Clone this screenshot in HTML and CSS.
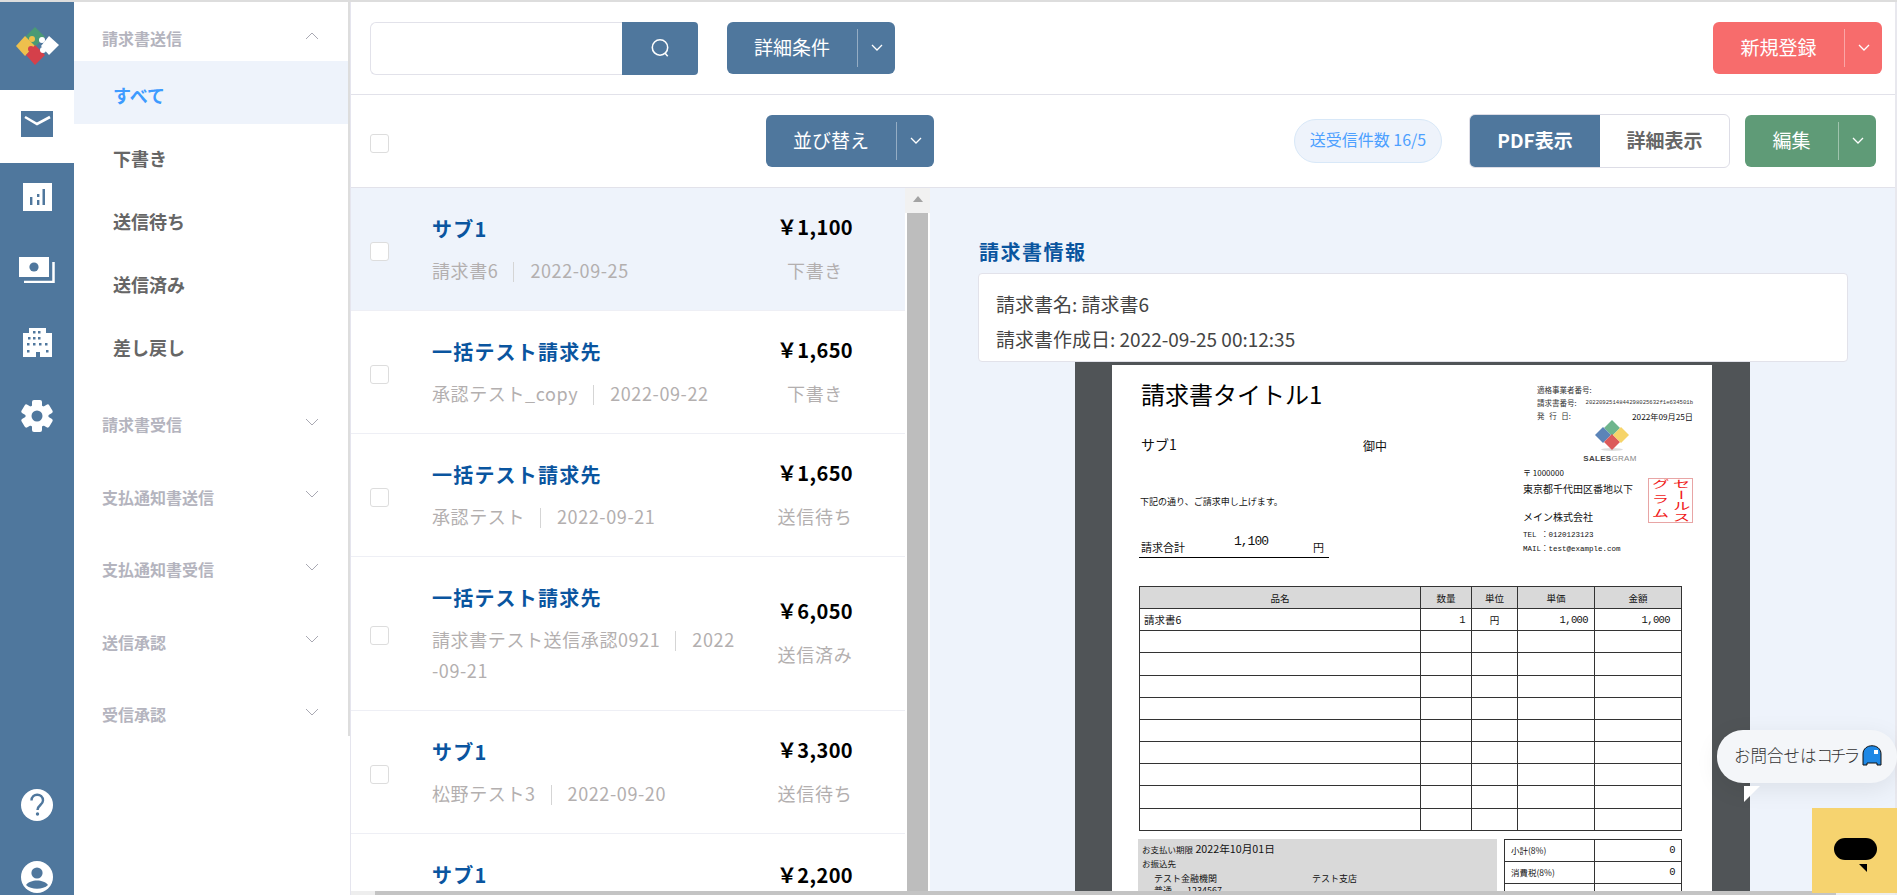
FILE: index.html
```html
<!DOCTYPE html>
<html lang="ja">
<head>
  <meta charset="UTF-8">
  <title>請求書送信</title>
  <link rel="stylesheet" href="styles.css">
</head>
<body>
<div class="app">

  <!-- icon rail -->
  <nav class="rail">
    <div class="rail-logo">
      <svg width="74" height="88" viewBox="0 2 74 88">
        <polygon points="35,27 45,37 35,47 25,37" fill="#4a9a75"/>
        <polygon points="25,36 35,46 25,56 16,46" fill="#eec04d"/>
        <circle cx="32" cy="39" r="3" fill="#eec04d"/>
        <polygon points="35,45 45,55 35,65 26,55" fill="#d5404a"/>
        <circle cx="31" cy="49" r="3" fill="#d5404a"/>
        <polygon points="49,36 59,45 49,55 41,46" fill="#fff"/>
        <circle cx="42" cy="40" r="3" fill="#fff"/>
        <circle cx="43" cy="50" r="3" fill="#fff"/>
      </svg>
    </div>
    <div class="rail-item active">
      <svg width="32" height="26" viewBox="0 0 32 26"><rect width="32" height="26" fill="#4f779d"/><path d="M4 6l12 7 13-7" fill="none" stroke="#fff" stroke-width="2.6"/></svg>
    </div>
    <div class="rail-item">
      <svg width="29" height="28" viewBox="0 0 29 28"><rect width="29" height="28" fill="#fff"/><path d="M7 14h2.4v8H7zM14 11h2.4v3H14zM14 17h2.4v5H14zM19.500 6h2.500v16h-2.500z" fill="#4f779d"/></svg>
    </div>
    <div class="rail-item">
      <svg width="36" height="26" viewBox="0 0 36 26"><rect width="30" height="20" fill="#fff"/><circle cx="15" cy="10" r="4.600" fill="#4f779d"/><path d="M5 25h29.500V5" fill="none" stroke="#fff" stroke-width="2.500"/></svg>
    </div>
    <div class="rail-item">
      <svg width="29" height="29" viewBox="0 0 29 29"><path d="M6 0h17v5h6v24H17v-5h-4v5H0V5h6z" fill="#fff"/><path d="M10 3h2.500v2.500H10zM15 3h2.500v2.500H15zM5 9h2.500v2.500H5zM10 9h2.500v2.500H10zM15 9h2.500v2.500H15zM4 15h2.500v2.500H4zM10 15h2.500v2.500H10zM16 15h2.500v2.500H16zM22 15h2.500v2.500H22zM4 22h2.500v2.500H4zM23 22h2.500v2.500H23z" fill="#4f779d"/></svg>
    </div>
    <div class="rail-item">
      <svg width="32" height="32" viewBox="-16 -16 32 32">
        <circle r="11.500" fill="#fff"/>
        <rect x="-5" y="-16" width="10" height="32" rx="2" fill="#fff"/>
        <rect x="-5" y="-16" width="10" height="32" rx="2" fill="#fff" transform="rotate(60)"/>
        <rect x="-5" y="-16" width="10" height="32" rx="2" fill="#fff" transform="rotate(120)"/>
        <circle r="5.500" fill="#4f779d"/>
      </svg>
    </div>
    <div class="rail-bottom">
      <svg width="32" height="32" viewBox="0 0 32 32"><circle cx="16" cy="16" r="16" fill="#fff"/><path d="M10.500 11.500c0-8 11.500-7.500 11.500 0 0 4.500-5.500 4.500-5.500 9.500" fill="none" stroke="#4f779d" stroke-width="2.400"/><circle cx="16.500" cy="25" r="1.700" fill="#4f779d"/></svg>
      <svg width="32" height="32" viewBox="0 0 32 32"><circle cx="16" cy="16" r="16" fill="#fff"/><circle cx="16" cy="12" r="5.600" fill="#4f779d"/><path d="M5 24c4-6 18-6 22 0-5 5-17 5-22 0z" fill="#4f779d"/></svg>
    </div>
  </nav>

  <!-- side menu -->
  <aside class="side">
    <div class="side-inner">
      <div class="side-head first"><span>請求書送信</span>
        <svg class="head-arrow" width="14" height="8" viewBox="0 0 14 8"><path d="M1 7l6-6 6 6" fill="none" stroke="#a9a9b3" stroke-width="1"/></svg>
      </div>
      <a class="side-link current">すべて</a>
      <a class="side-link">下書き</a>
      <a class="side-link">送信待ち</a>
      <a class="side-link">送信済み</a>
      <a class="side-link">差し戻し</a>
      <div class="side-head gap"><span>請求書受信</span>
        <svg class="head-arrow" width="14" height="8" viewBox="0 0 14 8"><path d="M1 1l6 6 6-6" fill="none" stroke="#a9a9b3" stroke-width="1"/></svg>
      </div>
      <div class="side-head"><span>支払通知書送信</span>
        <svg class="head-arrow" width="14" height="8" viewBox="0 0 14 8"><path d="M1 1l6 6 6-6" fill="none" stroke="#a9a9b3" stroke-width="1"/></svg>
      </div>
      <div class="side-head"><span>支払通知書受信</span>
        <svg class="head-arrow" width="14" height="8" viewBox="0 0 14 8"><path d="M1 1l6 6 6-6" fill="none" stroke="#a9a9b3" stroke-width="1"/></svg>
      </div>
      <div class="side-head"><span>送信承認</span>
        <svg class="head-arrow" width="14" height="8" viewBox="0 0 14 8"><path d="M1 1l6 6 6-6" fill="none" stroke="#a9a9b3" stroke-width="1"/></svg>
      </div>
      <div class="side-head"><span>受信承認</span>
        <svg class="head-arrow" width="14" height="8" viewBox="0 0 14 8"><path d="M1 1l6 6 6-6" fill="none" stroke="#a9a9b3" stroke-width="1"/></svg>
      </div>
    </div>
  </aside>

  <main class="main">
    <div class="toolbar">
      <div class="search">
        <div class="search-input"></div>
        <div class="search-btn">
          <svg width="22" height="22" viewBox="0 0 20 20"><circle cx="10" cy="9.500" r="7" fill="none" stroke="#fff" stroke-width="1.400"/><path d="M14.500 14.500l2.500 3" stroke="#fff" stroke-width="1.400"/></svg>
        </div>
      </div>
      <div class="split-btn blue w168">
        <span class="split-label">詳細条件</span><span class="split-sep"></span>
        <span class="split-caret"><svg width="12" height="8" viewBox="0 0 12 8"><path d="M1 1l5 5 5-5" fill="none" stroke="#fff" stroke-width="1.300"/></svg></span>
      </div>
      <div class="split-btn red w168 push">
        <span class="split-label">新規登録</span><span class="split-sep"></span>
        <span class="split-caret"><svg width="12" height="8" viewBox="0 0 12 8"><path d="M1 1l5 5 5-5" fill="none" stroke="#fff" stroke-width="1.300"/></svg></span>
      </div>
    </div>

    <div class="toolbar second">
      <span class="check"></span>
      <div class="split-btn blue w168 sort">
        <span class="split-label">並び替え</span><span class="split-sep"></span>
        <span class="split-caret"><svg width="12" height="8" viewBox="0 0 12 8"><path d="M1 1l5 5 5-5" fill="none" stroke="#fff" stroke-width="1.300"/></svg></span>
      </div>
      <span class="count-pill">送受信件数 16/5</span>
      <div class="tabs">
        <span class="tab on">PDF表示</span>
        <span class="tab">詳細表示</span>
      </div>
      <div class="split-btn green edit">
        <span class="split-label">編集</span><span class="split-sep"></span>
        <span class="split-caret"><svg width="12" height="8" viewBox="0 0 12 8"><path d="M1 1l5 5 5-5" fill="none" stroke="#fff" stroke-width="1.300"/></svg></span>
      </div>
    </div>

    <div class="content">
      <div class="list">
        <div class="rows">
          <div class="row selected">
            <span class="check"></span>
            <div class="row-body">
              <div class="row-name">サブ1</div>
              <div class="row-meta">請求書6<i class="bar"></i>2022-09-25</div>
            </div>
            <div class="row-side"><div class="row-price">&#xFFE5;1,100</div><div class="row-status">下書き</div></div>
          </div>
          <div class="row">
            <span class="check"></span>
            <div class="row-body">
              <div class="row-name">一括テスト請求先</div>
              <div class="row-meta">承認テスト_copy<i class="bar"></i>2022-09-22</div>
            </div>
            <div class="row-side"><div class="row-price">&#xFFE5;1,650</div><div class="row-status">下書き</div></div>
          </div>
          <div class="row">
            <span class="check"></span>
            <div class="row-body">
              <div class="row-name">一括テスト請求先</div>
              <div class="row-meta">承認テスト<i class="bar"></i>2022-09-21</div>
            </div>
            <div class="row-side"><div class="row-price">&#xFFE5;1,650</div><div class="row-status">送信待ち</div></div>
          </div>
          <div class="row">
            <span class="check"></span>
            <div class="row-body">
              <div class="row-name">一括テスト請求先</div>
              <div class="row-meta">請求書テスト送信承認0921<i class="bar"></i>2022<br>-09-21</div>
            </div>
            <div class="row-side"><div class="row-price">&#xFFE5;6,050</div><div class="row-status">送信済み</div></div>
          </div>
          <div class="row">
            <span class="check"></span>
            <div class="row-body">
              <div class="row-name">サブ1</div>
              <div class="row-meta">松野テスト3<i class="bar"></i>2022-09-20</div>
            </div>
            <div class="row-side"><div class="row-price">&#xFFE5;3,300</div><div class="row-status">送信待ち</div></div>
          </div>
          <div class="row last">
            <span class="check"></span>
            <div class="row-body">
              <div class="row-name">サブ1</div>
            </div>
            <div class="row-side"><div class="row-price">&#xFFE5;2,200</div></div>
          </div>
        </div>
        <div class="vscroll">
          <div class="vscroll-up"><span class="vscroll-arrow"></span></div>
          <div class="vscroll-thumb"></div>
        </div>
      </div>

      <div class="detail">
        <h3 class="detail-title">請求書情報</h3>
        <div class="info-card">
          <div>請求書名: 請求書6</div>
          <div>請求書作成日: 2022-09-25 00:12:35</div>
        </div>
        <div class="viewer">
          <div class="page">
            <div class="pdf-head">
              <div class="pdf-left">
                <div class="pdf-title">請求書タイトル1</div>
                <div class="pdf-to"><span class="pdf-to-name">サブ1</span><span class="pdf-to-suffix">御中</span></div>
                <div class="pdf-note">下記の通り、ご請求申し上げます。</div>
                <div class="pdf-total"><span class="total-label">請求合計</span><span class="total-num">1,100</span><span class="total-yen">円</span></div>
              </div>
              <div class="pdf-right">
                <div class="pdf-meta first"><span class="meta-label">適格事業者番号:</span></div>
                <div class="pdf-meta"><span class="meta-label">請求書番号:</span><span class="meta-no">2022092514844298025632f1e634501b</span></div>
                <div class="pdf-meta"><span class="meta-label spaced">発 行 日:</span><span class="meta-date">2022年09月25日</span></div>
                <svg class="pdf-logo" width="34" height="32" viewBox="0 0 34 32">
                  <ellipse cx="17" cy="29.500" rx="11" ry="1.500" fill="#ddd"/>
                  <polygon points="17,0 25,8 17,16 9,8" fill="#6fb58d"/>
                  <polygon points="8,7 16,15 8,23 0,15" fill="#5b84b8"/>
                  <polygon points="17,14 25,22 17,30 9,22" fill="#dc5a5a"/>
                  <polygon points="26,7 34,15 26,23 18,15" fill="#f6d469"/>
                </svg>
                <div class="pdf-brand">SALES<span>GRAM</span></div>
                <div class="pdf-addr-row">
                  <div class="pdf-addr">
                    <div class="addr-zip">〒 1000000</div>
                    <div class="addr-line">東京都千代田区番地以下</div>
                    <div class="addr-company">メイン株式会社</div>
                    <div class="addr-small tel">TEL ：0120123123</div>
                    <div class="addr-small">MAIL：test@example.com</div>
                  </div>
                  <div class="stamp">
                    <span class="stamp-col">セールス</span>
                    <span class="stamp-col wide">グラム</span>
                  </div>
                </div>
              </div>
            </div>

            <table class="items">
              <tr class="items-head"><th class="c-name">品名</th><th class="c-qty">数量</th><th class="c-unit">単位</th><th class="c-price">単価</th><th class="c-total">金額</th></tr>
              <tr><td class="t-left">請求書6</td><td class="t-num">1</td><td class="t-center">円</td><td class="t-num">1,000</td><td class="t-num pad">1,000</td></tr>
              <tr><td></td><td></td><td></td><td></td><td></td></tr>
              <tr><td></td><td></td><td></td><td></td><td></td></tr>
              <tr><td></td><td></td><td></td><td></td><td></td></tr>
              <tr><td></td><td></td><td></td><td></td><td></td></tr>
              <tr><td></td><td></td><td></td><td></td><td></td></tr>
              <tr><td></td><td></td><td></td><td></td><td></td></tr>
              <tr><td></td><td></td><td></td><td></td><td></td></tr>
              <tr><td></td><td></td><td></td><td></td><td></td></tr>
              <tr><td></td><td></td><td></td><td></td><td></td></tr>
            </table>

            <div class="pdf-foot">
              <div class="pay-box">
                <div class="pay-line"><span class="pay-small">お支払い期限</span> 2022年10月01日</div>
                <div class="pay-line pay-small">お振込先</div>
                <div class="pay-bank"><span class="bank-name">テスト金融機関</span><span>テスト支店</span></div>
                <div class="pay-bank"><span class="bank-type">普通</span><span>1234567</span></div>
              </div>
              <table class="sums">
                <tr><td class="sum-label">小計(8%)</td><td class="t-num">0</td></tr>
                <tr><td class="sum-label">消費税(8%)</td><td class="t-num">0</td></tr>
                <tr><td class="sum-label"></td><td></td></tr>
              </table>
            </div>
          </div>
        </div>
      </div>
    </div>

    <div class="hscroll"><span class="hscroll-thumb"></span></div>
  </main>

  <!-- chat widgets -->
  <div class="chat-bubble"><span>お問合せは<span class="chat-kana">コチラ</span></span>
    <svg width="20" height="21" viewBox="0 0 20 21"><path d="M1 9C1-2 19-2 19 9v11h-4v-2H5v2H1z" fill="#1e88e5" stroke="#111" stroke-width="1"/><path d="M12 5h4v4h-4z" fill="#fff"/></svg>
  </div>
  <span class="chat-tail"></span>
  <div class="chat-launcher">
    <span class="launcher-body"></span>
    <span class="launcher-tail"></span>
  </div>
</div>
</body>
</html>
```

FILE: styles.css
```css
* {
  box-sizing: border-box;
  margin: 0;
  padding: 0;
}
html, body {
  height: 100%;
  overflow: hidden;
}
body {
  font-family: "Noto Sans CJK JP", "Noto Sans", sans-serif;
  color: #444;
  background-color: #fff;
}
.app {
  position: relative;
  display: flex;
  height: 895px;
  border-top: 2px solid #ddd;
  overflow: hidden;
}

/* rail */
.rail {
  position: relative;
  width: 74px;
  flex-shrink: 0;
  background-color: #4f779d;
}
.rail-logo {
  height: 88px;
}
.rail-logo svg {
  display: block;
}
.rail-item {
  display: flex;
  justify-content: center;
  align-items: center;
  height: 73px;
  padding-bottom: 6px;
}
.rail-item.active {
  background-color: #fff;
}
.rail-bottom {
  position: absolute;
  left: 21px;
  bottom: 0;
  display: flex;
  flex-direction: column;
  gap: 40px;
  padding-bottom: 2px;
}
.rail-bottom svg {
  display: block;
}

/* side menu */
.side {
  width: 277px;
  flex-shrink: 0;
  border-right: 1px solid #e5e5ee;
}
.side-inner {
  height: 734px;
  width: 276px;
  border-right: 2px solid #ddd;
}
.side-head {
  display: flex;
  justify-content: space-between;
  align-items: center;
  height: 72.5px;
  padding: 0 29px 0 28px;
  font-size: 16px;
  font-weight: 700;
  color: #b4b4be;
}
.side-head.first {
  height: 59px;
  padding-top: 13px;
}
.side-head.gap {
  margin-top: 12px;
}
.head-arrow {
  margin-top: -5px;
}
.side-link {
  display: block;
  height: 63px;
  line-height: 68px;
  padding-left: 39px;
  font-size: 18px;
  font-weight: 700;
  color: #666;
}
.side-link.current {
  background-color: #eef3fb;
  color: #3d9bff;
}

/* main */
.main {
  flex: 1;
  min-width: 0;
  display: flex;
  flex-direction: column;
  border-right: 2px solid #e8e8ee;
}
.toolbar {
  display: flex;
  align-items: center;
  height: 93px;
  flex-shrink: 0;
  padding: 0 13px 0 19px;
  border-bottom: 1px solid #e2e2ea;
}
.toolbar.second {
  padding-right: 19px;
}
.search {
  display: flex;
  width: 328px;
  height: 53px;
}
.search-input {
  width: 252px;
  border: 1px solid #e2e2ea;
  border-right: 0;
  border-radius: 6px 0 0 6px;
}
.search-btn {
  display: flex;
  justify-content: center;
  align-items: center;
  width: 76px;
  background-color: #4f779d;
  border-radius: 0 4px 4px 0;
}
.split-btn {
  display: flex;
  align-items: center;
  height: 52px;
  margin-left: 29px;
  border-radius: 6px;
  color: #fff;
  font-size: 19px;
}
.split-btn.blue {
  background-color: #4f779d;
}
.split-btn.red {
  background-color: #f76c6c;
}
.split-btn.green {
  background-color: #5f9b77;
}
.split-btn.w168 {
  width: 168px;
}
.split-btn.red.w168 {
  width: 169px;
}
.split-btn.push {
  margin-left: auto;
}
.split-btn.sort {
  margin-left: 377px;
}
.split-btn.edit {
  width: 131px;
  margin-left: 15px;
}
.split-label {
  flex: 1;
  padding-bottom: 4px;
  text-align: center;
}
.split-sep {
  align-self: stretch;
  width: 1px;
  margin: 7px 0;
  background-color: rgba(255, 255, 255, 0.4);
}
.split-caret {
  display: flex;
  justify-content: center;
  width: 37px;
}
.check {
  display: block;
  width: 19px;
  height: 19px;
  margin-top: 4px;
  flex-shrink: 0;
  background-color: #fff;
  border: 1px solid #ddd;
  border-radius: 3px;
}
.count-pill {
  margin-left: auto;
  width: 148px;
  height: 44px;
  line-height: 39px;
  text-align: center;
  font-size: 16px;
  color: #4da0ff;
  background-color: #eef3fb;
  border: 1px solid #d8e8f8;
  border-radius: 22px;
}
.tabs {
  display: flex;
  width: 261px;
  height: 54px;
  margin-left: 27px;
  border: 1px solid #dddde6;
  border-radius: 6px;
  overflow: hidden;
}
.tab {
  flex: 1;
  line-height: 50px;
  text-align: center;
  font-size: 19px;
  font-weight: 700;
  color: #666;
}
.tab.on {
  flex: none;
  width: 130px;
  color: #fff;
  background-color: #4f779d;
}

/* list */
.content {
  flex: 1;
  min-height: 0;
  display: flex;
}
.list {
  display: flex;
  width: 579px;
  flex-shrink: 0;
}
.rows {
  width: 554px;
  overflow: hidden;
}
.row {
  display: flex;
  align-items: center;
  padding: 0 0 0 19px;
  border-bottom: 1px solid #eeeff5;
}
.row.selected {
  background-color: #eef3fb;
}
.row.last {
  align-items: flex-start;
  height: 60px;
  border-bottom: 0;
}
.row.last .check {
  margin-top: 65px;
}
.row.last .row-side {
  margin-top: 27px;
}
.row-body {
  width: 328px;
  margin-left: 43px;
  padding: 27px 0 24px;
}
.row-name {
  font-size: 20px;
  line-height: 28px;
  font-weight: 700;
  letter-spacing: 1.2px;
  color: #0a559f;
}
.row-meta {
  margin-top: 12px;
  font-size: 18px;
  line-height: 31px;
  letter-spacing: 0.6px;
  color: #b3afaf;
}
.bar {
  display: inline-block;
  width: 1px;
  height: 20px;
  margin: 0 16px 0 15px;
  vertical-align: -4px;
  background-color: #d5d5d5;
}
.row-side {
  width: 110px;
  text-align: center;
}
.row-price {
  font-size: 20px;
  line-height: 28px;
  font-weight: 700;
  letter-spacing: 0.4px;
  color: #000;
}
.row-status {
  margin-top: 14px;
  font-size: 18px;
  line-height: 31px;
  letter-spacing: 0.7px;
  color: #b3afaf;
}
.vscroll {
  width: 25px;
  display: flex;
  flex-direction: column;
}
.vscroll-up {
  display: flex;
  justify-content: center;
  height: 25px;
  padding-top: 8px;
  background-color: #f1f1f1;
}
.vscroll-arrow {
  width: 0;
  height: 0;
  border-left: 5px solid transparent;
  border-right: 5px solid transparent;
  border-bottom: 6px solid #a3a3a3;
}
.vscroll-thumb {
  flex: 1;
  width: 21px;
  margin-left: 2px;
  background-color: #bdbdbd;
}

/* detail */
.detail {
  flex: 1;
  min-width: 0;
  display: flex;
  flex-direction: column;
  padding: 49px 47px 0 48px;
  background-color: #eef3fb;
}
.detail-title {
  margin-left: 1px;
  font-size: 20px;
  line-height: 30px;
  letter-spacing: 1.5px;
  color: #0a559f;
  margin-bottom: 6px;
}
.info-card {
  height: 89px;
  padding: 12px 17px 0;
  font-size: 19px;
  line-height: 35px;
  background-color: #fff;
  border: 1px solid #e2e2ea;
  border-radius: 4px;
}
.viewer {
  flex: 1;
  min-height: 0;
  width: 675px;
  margin-left: 97px;
  padding: 3px 38px 0 37px;
  overflow: hidden;
  background-color: #505457;
}

/* pdf page */
.page {
  width: 600px;
  height: 848px;
  padding: 0 30px 0 27px;
  background-color: #fff;
  color: #111;
}
.pdf-head {
  display: flex;
  height: 221px;
}
.pdf-left {
  width: 384px;
  flex-shrink: 0;
}
.pdf-title {
  margin: 14px 0 0 2px;
  font-size: 24px;
  line-height: 30px;
  color: #000;
}
.pdf-to {
  display: flex;
  margin: 25px 0 0 2px;
  font-size: 14px;
  line-height: 20px;
}
.pdf-to-name {
  width: 222px;
}
.pdf-to-suffix {
  font-size: 12px;
  padding-top: 2px;
}
.pdf-note {
  margin: 39px 0 0 1px;
  font-size: 9px;
  line-height: 14px;
}
.pdf-total {
  display: flex;
  width: 190px;
  margin-top: 30px;
  padding: 0 0 2px 2px;
  font-size: 11px;
  line-height: 16px;
  border-bottom: 1.5px solid #000;
}
.total-label {
  width: 93px;
}
.total-num {
  width: 79px;
  margin-top: -5px;
  font-family: "Liberation Mono", monospace;
  font-size: 13px;
  letter-spacing: -1px;
}
.pdf-right {
  width: 170px;
  flex-shrink: 0;
}
.pdf-meta {
  display: flex;
  justify-content: space-between;
  align-items: center;
  height: 13px;
  padding-left: 14px;
  font-size: 7.500px;
  color: #333;
}
.pdf-meta.first {
  margin-top: 18px;
}
.meta-label {
  flex-shrink: 0;
}
.meta-label.spaced {
  word-spacing: 3px;
}
.meta-no {
  font-family: "Liberation Mono", monospace;
  font-size: 5.600px;
}
.meta-date {
  font-size: 8.200px;
  color: #111;
}
.pdf-logo {
  display: block;
  margin: -2px 0 0 72px;
}
.pdf-brand {
  width: 174px;
  margin-top: 2px;
  text-align: center;
  font-family: "Liberation Sans", sans-serif;
  font-size: 8px;
  line-height: 10px;
  font-weight: 700;
  letter-spacing: 0.3px;
  color: #444;
}
.pdf-brand span {
  font-weight: 400;
  color: #888;
}
.pdf-addr-row {
  display: flex;
  justify-content: space-between;
  margin-top: 2px;
}
.addr-zip {
  font-size: 8px;
  line-height: 14px;
}
.addr-line {
  margin-top: 1px;
  font-size: 10px;
  line-height: 16px;
  color: #111;
}
.addr-company {
  margin-top: 12px;
  font-size: 10px;
  line-height: 16px;
}
.addr-small {
  font-family: "Liberation Mono", "Noto Sans CJK JP", monospace;
  font-size: 7.500px;
  line-height: 14px;
}
.addr-small.tel {
  margin-top: 3px;
}
.stamp {
  display: flex;
  flex-direction: row-reverse;
  justify-content: center;
  gap: 10px;
  flex-shrink: 0;
  width: 45px;
  height: 45px;
  margin-top: 12px;
  border: 1px solid #e8a5a5;
  color: #f01818;
}
.stamp-col {
  writing-mode: vertical-rl;
  white-space: nowrap;
  width: 11px;
  font-size: 10.700px;
  line-height: 11px;
  transform: scaleX(1.65);
}
.stamp-col.wide {
  letter-spacing: 3.800px;
}

/* pdf tables */
.items {
  width: 543px;
  table-layout: fixed;
  border-collapse: collapse;
  font-size: 9.500px;
}
.items th, .items td, .sums td {
  border: 1px solid #333;
}
.items tr {
  height: 22.170px;
}
.items-head {
  background-color: #d9d9d9;
}
.items th {
  font-weight: 400;
}
.c-name {
  width: 281px;
}
.c-qty {
  width: 51px;
}
.c-unit {
  width: 46px;
}
.c-price {
  width: 77px;
}
.t-left {
  padding-left: 4px;
  font-size: 10.500px;
}
.t-center {
  text-align: center;
}
.t-num {
  padding-right: 6px;
  text-align: right;
  font-family: "Liberation Mono", monospace;
  font-size: 10.500px;
  letter-spacing: -0.6px;
}
.t-num.pad {
  padding-right: 11px;
}
.pdf-foot {
  display: flex;
  gap: 7px;
  margin: 8px 0 0 -1px;
}
.pay-box {
  width: 359px;
  height: 100px;
  padding: 3px 4px;
  font-size: 9px;
  line-height: 14px;
  background-color: #d9d9d9;
}
.pay-line {
  font-size: 10.700px;
}
.pay-small {
  font-size: 8.500px;
}
.pay-bank {
  display: flex;
  padding-left: 12px;
  line-height: 12px;
}
.pay-bank:nth-child(3) {
  margin-top: 3px;
}
.bank-name {
  width: 158px;
}
.bank-type {
  width: 33px;
}
.sums {
  width: 178px;
  height: 66px;
  table-layout: fixed;
  border-collapse: collapse;
  font-size: 8.500px;
}
.sums tr {
  height: 22px;
}
.sum-label {
  width: 90px;
  padding-left: 6px;
}

/* bottom scroll bar */
.hscroll {
  height: 4px;
  flex-shrink: 0;
  padding: 0 59px 0 24px;
  background-color: #eee;
}
.hscroll-thumb {
  display: block;
  height: 100%;
  background-color: #c4c4c4;
}

/* chat */
.chat-bubble {
  position: absolute;
  left: 1717px;
  top: 728px;
  display: flex;
  align-items: center;
  gap: 5px;
  width: 180px;
  height: 53px;
  padding: 0 0 3px 17px;
  font-size: 16.500px;
  font-weight: 300;
  color: #333;
  background-color: #f4f6f9;
  border-radius: 26px;
  box-shadow: 0 6px 24px rgba(0, 0, 0, 0.08);
}
.chat-kana {
  letter-spacing: -2.900px;
}
.chat-tail {
  position: absolute;
  left: 1744px;
  top: 784px;
  width: 0;
  height: 0;
  border-top: 16px solid #fff;
  border-right: 16px solid transparent;
}
.chat-launcher {
  position: absolute;
  left: 1812px;
  top: 806px;
  width: 85px;
  height: 85px;
  background-color: #f6d36f;
}
.launcher-body {
  position: absolute;
  left: 22px;
  top: 30px;
  width: 43px;
  height: 22px;
  background-color: #000;
  border-radius: 11px;
}
.launcher-tail {
  position: absolute;
  left: 47px;
  top: 56px;
  width: 0;
  height: 0;
  border-top: 8px solid #000;
  border-left: 8px solid transparent;
}
```
